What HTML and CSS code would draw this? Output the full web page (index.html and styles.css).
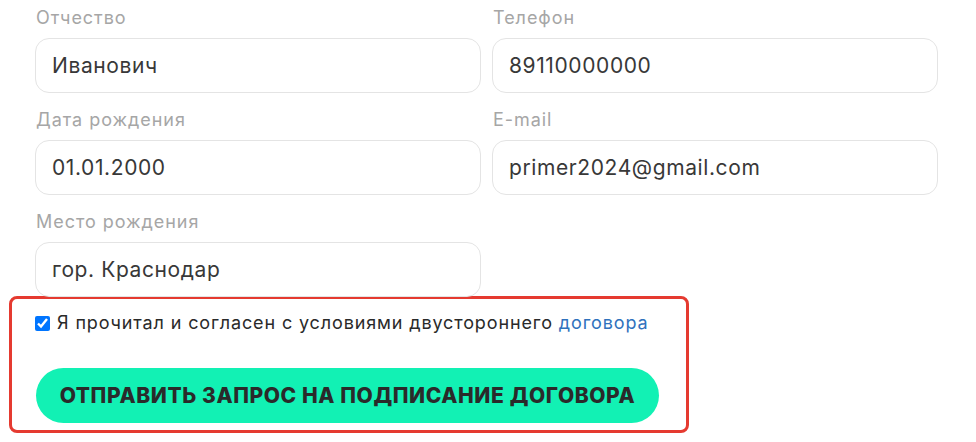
FILE: index.html
```html
<!DOCTYPE html>
<html lang="ru">
<head>
<meta charset="utf-8">
<title>Форма</title>
<link rel="stylesheet" href="styles.css">
</head>
<body>
<div class="page">
  <div class="grid">
    <div class="field">
      <label class="label">Отчество</label>
      <div class="input">Иванович</div>
    </div>
    <div class="field">
      <label class="label">Телефон</label>
      <div class="input">89110000000</div>
    </div>
    <div class="field">
      <label class="label">Дата рождения</label>
      <div class="input">01.01.2000</div>
    </div>
    <div class="field">
      <label class="label">E-mail</label>
      <div class="input">primer2024@gmail.com</div>
    </div>
    <div class="field">
      <label class="label">Место рождения</label>
      <div class="input">гор. Краснодар</div>
    </div>
  </div>
  <div class="highlight">
    <label class="agree">
      <input type="checkbox" class="check" checked>
      <span>Я прочитал и согласен с условиями двустороннего <a class="link" href="#">договора</a></span>
    </label>
    <button class="submit" type="button">Отправить запрос на подписание договора</button>
  </div>
</div>
</body>
</html>
```
FILE: styles.css
```css
html, body {
  margin: 0;
  padding: 0;
  background: #ffffff;
}
.page {
  padding: 7px 0 0 9px;
  font-family: Inter, "Noto Sans", sans-serif;
}
.grid {
  display: grid;
  grid-template-columns: 446px 446px;
  column-gap: 11px;
  row-gap: 16px;
  padding-left: 26px;
}
.field {
  display: flex;
  flex-direction: column;
  gap: 9px;
}
.label {
  font-size: 18px;
  line-height: 22px;
  letter-spacing: 0.95px;
  color: #a6a6a6;
  padding-left: 1px;
}
.input {
  box-sizing: border-box;
  height: 55px;
  border: 1px solid #e4e4e4;
  border-radius: 14px;
  padding: 0 16px;
  display: flex;
  align-items: center;
  font-size: 21px;
  letter-spacing: 0.6px;
  color: #383838;
}
.highlight {
  box-sizing: border-box;
  width: 680px;
  margin-top: -1px;
  border: 3px solid #e53a30;
  border-radius: 8px;
  padding: 13px 0 7px 23px;
  display: flex;
  flex-direction: column;
  align-items: flex-start;
  gap: 34px;
}
.agree {
  display: flex;
  align-items: center;
  gap: 7px;
  font-family: Inter, "Noto Sans", sans-serif;
  font-size: 18px;
  line-height: 22px;
  letter-spacing: 0.87px;
  color: #2a2a2a;
}
.check {
  width: 15px;
  height: 15px;
  margin: 0;
}
.link {
  color: #2f72bd;
  text-decoration: none;
}
.submit {
  box-sizing: border-box;
  width: 623px;
  height: 55px;
  margin-left: 1px;
  border: none;
  border-radius: 28px;
  background: #12f1b4;
  color: #2a2a2a;
  font-family: Inter, sans-serif;
  font-weight: 800;
  font-size: 21px;
  letter-spacing: 0.6px;
  text-transform: uppercase;
  cursor: pointer;
}
```
